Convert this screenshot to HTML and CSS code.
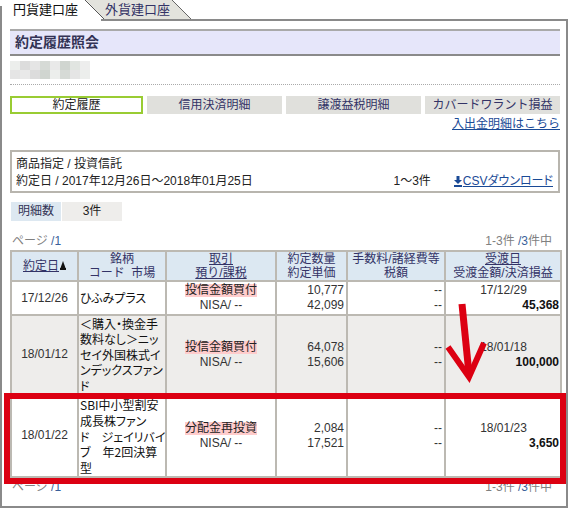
FILE: index.html
```html
<!DOCTYPE html>
<html lang="ja">
<head>
<meta charset="utf-8">
<title>約定履歴照会</title>
<link rel="stylesheet" href="styles.css">
</head>
<body>
<div class="page">
  <div class="tabs">
    <svg class="tabs-bg" width="570" height="21" viewBox="0 0 570 21">
      <polygon points="86,0 172,0 191,19 104,19" fill="#e3e3dd"/>
      <line x1="85" y1="0" x2="104" y2="19" stroke="#555" stroke-width="1"/>
      <line x1="172" y1="0" x2="191" y2="19" stroke="#666" stroke-width="1"/>
      <rect x="101" y="19" width="467" height="2" fill="#8a8a8a"/>
      <rect x="0" y="6" width="2" height="15" fill="#8a8a8a"/>
      <rect x="566" y="19" width="2" height="2" fill="#8a8a8a"/>
    </svg>
    <span class="tab tab-active">円貨建口座</span>
    <span class="tab tab-other">外貨建口座</span>
  </div>
  <div class="frame">
    <h1 class="title">約定履歴照会</h1>
    <div class="mosaic">
      <span class="m1"></span><span class="m2"></span><span class="m3"></span><span class="m4"></span><span class="m5"></span><span class="m6"></span><span class="m7"></span><span class="m8"></span>
      <span class="m3"></span><span class="m5"></span><span class="m2"></span><span class="m6"></span><span class="m1"></span><span class="m4"></span><span class="m3"></span><span class="m1"></span>
    </div>
    <hr class="dots">
    <div class="btns">
      <div class="btn btn-active">約定履歴</div>
      <div class="btn">信用決済明細</div>
      <div class="btn">譲渡益税明細</div>
      <div class="btn">カバードワラント損益</div>
    </div>
    <div class="link-row"><a class="link" href="#">入出金明細はこちら</a></div>
    <div class="info">
      <div class="info-line">商品指定 / 投資信託</div>
      <div class="info-line info-line2">
        <span class="info-date">約定日 / 2017年12月26日〜2018年01月25日</span>
        <span class="info-count">1〜3件</span>
        <a class="link csv" href="#"><svg class="dl-icon" width="8" height="11" viewBox="0 0 8 11"><rect x="2.5" y="0" width="3" height="4" fill="#1a4a96"/><polygon points="0,4 8,4 4,8" fill="#1a4a96"/><rect x="0" y="9" width="8" height="2" fill="#1a4a96"/></svg><span class="csv-text">CSVダウンロード</span></a>
      </div>
    </div>
    <div class="summary"><span class="sum-label">明細数</span><span class="sum-val">3件</span></div>
    <div class="pager"><span class="pg-left">ページ <span class="blue">/1</span></span><span class="pg-right">1-3件 <span class="blue">/3</span>件中</span></div>
    <table class="grid">
      <colgroup>
        <col class="c1"><col class="c2"><col class="c3"><col class="c4"><col class="c5"><col class="c6">
      </colgroup>
      <thead>
        <tr>
          <th><span class="u">約定日</span><svg class="sort" width="6" height="9" viewBox="0 0 6 9"><polygon points="3,0 5.5,7 0.5,7" fill="#111"/><rect x="0" y="7" width="6" height="2" fill="#111"/></svg></th>
          <th>銘柄<br>コード&nbsp; 市場</th>
          <th><span class="u">取引</span><br><span class="u">預り/課税</span></th>
          <th>約定数量<br>約定単価</th>
          <th>手数料/諸経費等<br>税額</th>
          <th><span class="u">受渡日</span><br>受渡金額/決済損益</th>
        </tr>
      </thead>
      <tbody>
        <tr class="r1">
          <td class="ctr">17/12/26</td>
          <td class="name">ひふみプラス</td>
          <td class="ctr"><span class="kind">投信金額買付</span><br>NISA/ --</td>
          <td class="num">10,777<br>42,099</td>
          <td class="num">--<br>--</td>
          <td class="settle"><div class="ctr">17/12/29</div><div class="num"><b>45,368</b></div></td>
        </tr>
        <tr class="r2 alt">
          <td class="ctr">18/01/12</td>
          <td class="name">＜購入・換金手<br>数料なし＞ニッ<br>セイ外国株式イ<br>ンデックスファン<br>ド</td>
          <td class="ctr"><span class="kind">投信金額買付</span><br>NISA/ --</td>
          <td class="num">64,078<br>15,606</td>
          <td class="num">--<br>--</td>
          <td class="settle"><div class="ctr">18/01/18</div><div class="num"><b>100,000</b></div></td>
        </tr>
        <tr class="r3">
          <td class="ctr">18/01/22</td>
          <td class="name">SBI中小型割安<br>成長株ファン<br>ド　ジェイリバイ<br>ブ　年2回決算<br>型</td>
          <td class="ctr"><span class="kind">分配金再投資</span><br>NISA/ --</td>
          <td class="num">2,084<br>17,521</td>
          <td class="num">--<br>--</td>
          <td class="settle"><div class="ctr">18/01/23</div><div class="num"><b>3,650</b></div></td>
        </tr>
      </tbody>
    </table>
    <div class="pager pager-bottom"><span class="pg-left">ページ <span class="blue">/1</span></span><span class="pg-right">1-3件 <span class="blue">/3</span>件中</span></div>
  </div>
  <div class="highlight"></div>
  <svg class="arrow" width="570" height="509" viewBox="0 0 570 509">
    <line x1="462" y1="304" x2="469" y2="374" stroke="#dc0012" stroke-width="7"/>
    <polyline points="448,347 469,377 484,343" fill="none" stroke="#dc0012" stroke-width="6" stroke-linejoin="miter"/>
  </svg>
</div>
</body>
</html>
```

FILE: styles.css
```css
* { box-sizing: border-box; }

body {
  margin: 0;
  font-family: "Liberation Sans", "Noto Sans CJK JP", sans-serif;
  font-size: 12px;
  color: #222;
  background: #fff;
}

.page {
  position: relative;
  width: 570px;
  height: 509px;
  overflow: hidden;
}

/* tabs */
.tabs {
  position: relative;
  height: 21px;
  display: flex;
  align-items: flex-start;
}
.tabs-bg {
  position: absolute;
  left: 0;
  top: 0;
  z-index: 0;
}
.tab {
  position: relative;
  z-index: 1;
  font-size: 13px;
  line-height: 19px;
}
.tab-active {
  margin-left: 13px;
  width: 65px;
  color: #111;
}
.tab-other {
  margin-left: 27px;
  color: #333366;
}

/* frame */
.frame {
  width: 568px;
  height: 487px;
  border: 2px solid #8a8a8a;
  border-top: none;
  padding: 8px 6px 0 8px;
}

.title {
  margin: 0;
  height: 27px;
  border-top: 2px solid #a9a9a9;
  border-bottom: 2px solid #8a8a8a;
  background: #e6e6fa;
  padding-left: 5px;
  font-size: 14px;
  font-weight: bold;
  line-height: 23px;
  color: #333355;
}

.mosaic {
  margin-top: 5px;
  display: grid;
  grid-template-columns: repeat(8, 10px);
  grid-template-rows: 9px 9px;
  width: 80px;
}
.m1 { background: #eceeec; }
.m2 { background: #dcdcdc; }
.m3 { background: #e5e5e5; }
.m4 { background: #d6dad6; }
.m5 { background: #e9e9e9; }
.m6 { background: #d0d5d0; }
.m7 { background: #e1e5e1; }
.m8 { background: #ededed; }

.dots {
  margin: 5px 0 0;
  height: 0;
  border: none;
  border-top: 1px dotted #aaa;
}

.btns {
  margin-top: 11px;
  display: flex;
  gap: 4px;
}
.btn {
  width: 135px;
  height: 18px;
  background: #e0e0dc;
  color: #333366;
  text-align: center;
  line-height: 18px;
  font-size: 12px;
}
.btn-active {
  width: 133px;
  background: #fff;
  border: 2px solid #99cc33;
  line-height: 14px;
  color: #222;
}

.link-row {
  margin-top: 3px;
  text-align: right;
  line-height: 15px;
}
.link {
  color: #1a4a96;
  text-decoration: underline;
}

.info {
  margin-top: 18px;
  height: 43px;
  border: 2px solid #b8b5ae;
  padding: 4px 5px 0 4px;
  line-height: 17px;
  color: #222;
}
.info-line2 {
  display: flex;
  align-items: center;
}
.info-date { flex: 1; }
.info-count { margin-right: 23px; }
.csv {
  display: inline-flex;
  align-items: center;
  gap: 1px;
}
.csv-text {
  font-feature-settings: "palt";
}
.dl-icon { display: block; }

.summary {
  margin-top: 9px;
  margin-left: 1px;
  display: flex;
  height: 19px;
  line-height: 19px;
}
.sum-label {
  width: 50px;
  background: #dde8f1;
  color: #333355;
  text-align: center;
}
.sum-val {
  width: 60px;
  margin-left: 1px;
  background: #eeedeb;
  text-align: center;
  color: #222;
}

.pager {
  margin-top: 12px;
  display: flex;
  justify-content: space-between;
  line-height: 16px;
  height: 16px;
  padding: 0 8px 0 2px;
  color: #808080;
}
.pager .blue { color: #3a5f9a; }
.pager-bottom { margin-top: 1px; }

/* table */
.grid {
  margin-top: 1px;
  width: 550px;
  table-layout: fixed;
  border-collapse: collapse;
  font-size: 12px;
}
.c1 { width: 67px; }
.c2 { width: 88px; }
.c3 { width: 110px; }
.c4 { width: 71px; }
.c5 { width: 98px; }
.c6 { width: 116px; }

.grid th,
.grid td {
  border: 2px solid #bcb9b2;
}
.grid th {
  background: #dce8f2;
  color: #333366;
  font-weight: normal;
  line-height: 14px;
  height: 28px;
  padding: 0 1px;
  text-align: center;
  vertical-align: middle;
}
.grid th .u { text-decoration: underline; }
.sort { margin-left: 1px; vertical-align: 0; }

.grid td {
  line-height: 15px;
  padding: 1px 2px;
  vertical-align: middle;
  color: #333;
}
.grid tr.r1 td { height: 34px; }
.grid tr.r2 td { height: 79px; }
.grid tr.r3 td { height: 83px; }
.grid tr.alt td { background: #eeedeb; }

.grid td.ctr, .grid .ctr { text-align: center; }
.grid td.num, .grid .num { text-align: right; }
.grid td.name {
  font-family: "Noto Sans CJK JP", sans-serif;
  font-feature-settings: "palt";
  line-height: 15.4px;
  white-space: nowrap;
  padding: 0 0 0 1px;
  color: #111;
}
.grid tr.r3 td.name { line-height: 15.8px; padding-top: 2px; }
.grid td.settle { padding: 1px 1px 1px 2px; }
.grid b { color: #111; }
.kind {
  background: #ffcccc;
  color: #222;
  line-height: 13px;
  display: inline-block;
}

/* annotations */
.highlight {
  position: absolute;
  left: 4px;
  top: 393px;
  width: 562px;
  height: 91px;
  border: 6px solid #dc0012;
}
.arrow {
  position: absolute;
  left: 0;
  top: 0;
  pointer-events: none;
}
```
